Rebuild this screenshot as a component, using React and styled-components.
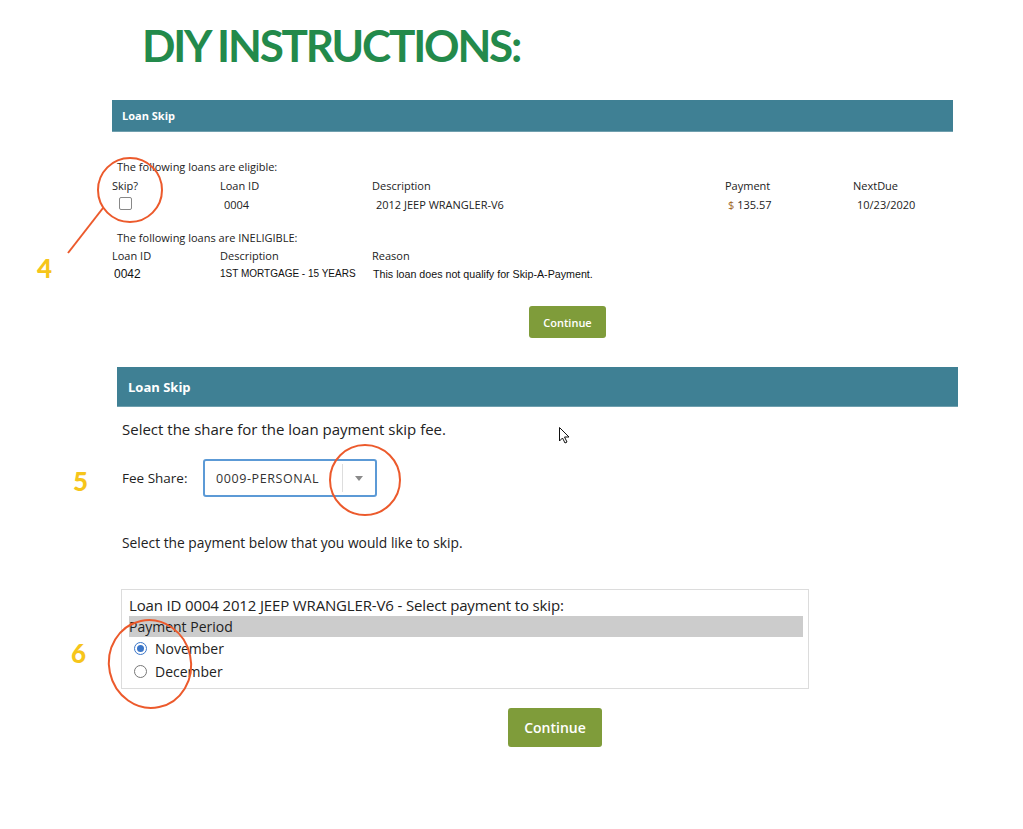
import React from "react";
import styled, { createGlobalStyle } from "styled-components";

const GlobalStyle = createGlobalStyle`
  body {
    margin: 0;
    background: #ffffff;
    font-family: "Open Sans", "Liberation Sans", sans-serif;
    color: #222;
  }
`;

const Page = styled.div`
  position: relative;
  width: 1023px;
  height: 829px;
  overflow: hidden;
`;

const Title = styled.h1`
  margin: 0;
  padding: 21px 0 0 142px;
  font-family: Lato, "Liberation Sans", sans-serif;
  font-weight: 700;
  font-size: 44px;
  line-height: 48px;
  letter-spacing: -2.2px;
  color: #238a4b;
`;

const Section = styled.section`
  margin-left: ${(p) => p.left}px;
  width: 841px;
  margin-top: ${(p) => p.top}px;
`;

const Bar = styled.div`
  background: #3f8094;
  color: #fff;
  font-weight: 700;
  display: flex;
  align-items: center;
  height: ${(p) => (p.big ? 40 : 32)}px;
  padding-left: ${(p) => (p.big ? 11 : 10)}px;
  font-size: ${(p) => (p.big ? 13 : 11)}px;
  border-bottom: 1px solid #6f9fae;
  box-sizing: border-box;
`;

const Note = styled.div`
  font-size: 11px;
  line-height: 14px;
  color: #222;
  padding-left: 5px;
  margin-top: ${(p) => p.top || 0}px;
`;

const Grid = styled.div`
  display: grid;
  grid-template-columns: 108px 152px 353px 128px 1fr;
  align-items: center;
  font-size: ${(p) => (p.arial ? 10 : 11)}px;
  font-family: ${(p) =>
    p.arial ? '"Liberation Sans", Arial, sans-serif' : '"Open Sans", sans-serif'};
  line-height: 14px;
  height: ${(p) => p.h || 18}px;
  margin-top: ${(p) => p.top || 0}px;
  color: ${(p) => (p.arial ? "#111" : "#222")};
`;

const Cell = styled.span`
  padding-left: ${(p) => p.pad || 0}px;
  font-size: ${(p) => (p.size ? `${p.size}px` : "inherit")};
  white-space: nowrap;
`;

const Dollar = styled.span`
  color: #a0661d;
`;

const Check = styled.span`
  display: inline-block;
  width: 11px;
  height: 11px;
  border: 1px solid #888;
  border-radius: 2px;
  margin-left: 7px;
  background: #fff;
`;

const ButtonRow = styled.div`
  display: flex;
  justify-content: flex-start;
  margin-top: ${(p) => p.top}px;
  padding-left: ${(p) => p.indent}px;
`;

const Button = styled.button`
  border: none;
  background: #7f9c3a;
  color: #fff;
  font-family: "Open Sans", sans-serif;
  font-weight: 600;
  font-size: ${(p) => (p.big ? 14 : 11)}px;
  width: ${(p) => (p.big ? 94 : 77)}px;
  height: ${(p) => (p.big ? 39 : 32)}px;
  border-radius: 3px;
  padding: 0;
`;

const Text = styled.div`
  font-size: ${(p) => p.size || 13}px;
  line-height: 18px;
  color: #222;
  padding-left: 5px;
  margin-top: ${(p) => p.top || 0}px;
`;

const FeeRow = styled.div`
  display: flex;
  align-items: center;
  margin-top: 21px;
  padding-left: 5px;
  font-size: 13.5px;
`;

const FeeLabel = styled.span`
  width: 81px;
`;

const Select = styled.div`
  display: flex;
  align-items: stretch;
  width: 174px;
  height: 38px;
  box-sizing: border-box;
  border: 2px solid #5c9ad6;
  border-radius: 3px;
  background: #fff;
`;

const SelectValue = styled.span`
  flex: 1;
  display: flex;
  align-items: center;
  padding-left: 11px;
  font-size: 12.5px;
  letter-spacing: 0.6px;
  color: #333;
  border-right: 1px solid #ddd;
  margin: 3px 0;
`;

const SelectArrow = styled.span`
  width: 32px;
  display: flex;
  align-items: center;
  justify-content: center;
  &::after {
    content: "";
    border-left: 4px solid transparent;
    border-right: 4px solid transparent;
    border-top: 5px solid #8a8a8a;
  }
`;

const Box = styled.div`
  margin-top: 37px;
  margin-left: 4px;
  width: 688px;
  box-sizing: border-box;
  border: 1px solid #dcdcdc;
  padding: 6px 5px 5px 7px;
  font-size: 14px;
`;

const BoxTitle = styled.div`
  font-size: 15px;
  line-height: 18px;
  letter-spacing: -0.15px;
`;

const Period = styled.div`
  background: #cccccc;
  height: 21px;
  line-height: 21px;
  margin-top: 2px;
`;

const Option = styled.label`
  display: flex;
  align-items: center;
  height: 23px;
  padding-left: 5px;
  gap: 8px;
`;

const Radio = styled.span`
  width: 13px;
  height: 13px;
  border-radius: 50%;
  box-sizing: border-box;
  border: 1px solid ${(p) => (p.on ? "#3b76c8" : "#777")};
  display: flex;
  align-items: center;
  justify-content: center;
  &::after {
    content: "";
    width: 7px;
    height: 7px;
    border-radius: 50%;
    background: ${(p) => (p.on ? "#3b76c8" : "transparent")};
  }
`;

const Marker = styled.span`
  position: absolute;
  left: ${(p) => p.x}px;
  top: ${(p) => p.y}px;
  font-family: Lato, "Liberation Sans", sans-serif;
  font-weight: 900;
  font-size: 26px;
  line-height: 26px;
  color: #f6c51b;
`;

const Overlay = styled.svg`
  position: absolute;
  left: 0;
  top: 0;
  pointer-events: none;
`;

export default function App() {
  return (
    <Page>
      <GlobalStyle />
      <Title>DIY INSTRUCTIONS:</Title>

      <Section left={112} top={31}>
        <Bar>Loan Skip</Bar>
        <Note top={28}>The following loans are eligible:</Note>
        <Grid h={19} top={2}>
          <Cell>Skip?</Cell>
          <Cell>Loan ID</Cell>
          <Cell>Description</Cell>
          <Cell>Payment</Cell>
          <Cell>NextDue</Cell>
        </Grid>
        <Grid h={19}>
          <Cell>
            <Check />
          </Cell>
          <Cell pad={4}>0004</Cell>
          <Cell pad={4}>2012 JEEP WRANGLER-V6</Cell>
          <Cell pad={3}>
            <Dollar>$</Dollar> 135.57
          </Cell>
          <Cell pad={4}>10/23/2020</Cell>
        </Grid>
        <Note top={17}>The following loans are INELIGIBLE:</Note>
        <Grid h={18} top={2}>
          <Cell>Loan ID</Cell>
          <Cell>Description</Cell>
          <Cell>Reason</Cell>
        </Grid>
        <Grid arial h={18}>
          <Cell pad={2} size={12}>0042</Cell>
          <Cell>1ST MORTGAGE - 15 YEARS</Cell>
          <Cell pad={1} size={10.7}>This loan does not qualify for Skip-A-Payment.</Cell>
        </Grid>
        <ButtonRow top={23} indent={417}>
          <Button>Continue</Button>
        </ButtonRow>
      </Section>

      <Section left={117} top={29}>
        <Bar big>Loan Skip</Bar>
        <Text top={13} size={15}>Select the share for the loan payment skip fee.</Text>
        <FeeRow>
          <FeeLabel>Fee Share:</FeeLabel>
          <Select>
            <SelectValue>0009-PERSONAL</SelectValue>
            <SelectArrow />
          </Select>
        </FeeRow>
        <Text top={37} size={13.8}>
          Select the payment below that you would like to skip.
        </Text>
        <Box>
          <BoxTitle>Loan ID 0004 2012 JEEP WRANGLER-V6 - Select payment to skip:</BoxTitle>
          <Period>Payment Period</Period>
          <Option>
            <Radio on />
            November
          </Option>
          <Option>
            <Radio />
            December
          </Option>
        </Box>
        <ButtonRow top={19} indent={391}>
          <Button big>Continue</Button>
        </ButtonRow>
      </Section>

      <Marker x={37} y={255}>4</Marker>
      <Marker x={73} y={468}>5</Marker>
      <Marker x={71} y={640}>6</Marker>

      <Overlay width="1023" height="829" viewBox="0 0 1023 829">
        <g fill="none" stroke="#ec5a2c" strokeWidth="2">
          <circle cx="130" cy="190" r="32" />
          <line x1="103" y1="208" x2="68" y2="253" />
          <circle cx="365" cy="480" r="35" />
          <ellipse cx="150" cy="664" rx="41" ry="44" transform="rotate(-12 150 664)" />
        </g>
        <path
          d="M559.5 427.5 L559.5 441 L562.5 438 L565 443 L567 442 L564.5 437 L569 437 Z"
          fill="#fff"
          stroke="#111"
          strokeWidth="1"
        />
      </Overlay>
    </Page>
  );
}
